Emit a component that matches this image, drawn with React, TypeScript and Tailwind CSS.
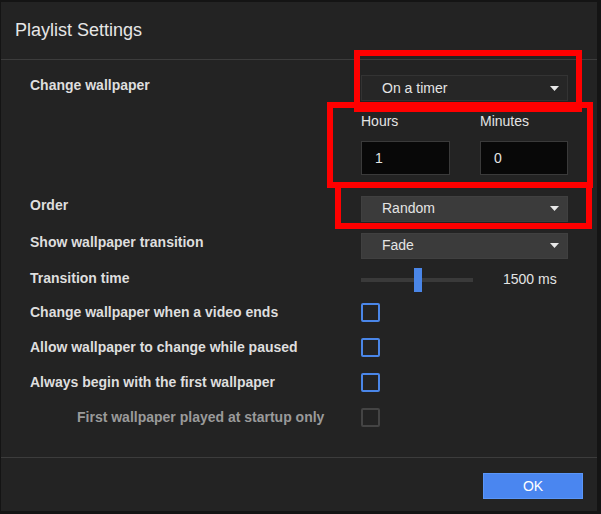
const font = { fontFamily: '"Liberation Sans", Arial, sans-serif' };

const Caret = () => (
  <svg width="9" height="5" viewBox="0 0 9 5" className="ml-auto">
    <path d="M0 0 L9 0 L4.5 5 Z" fill="#e8e8e8" />
  </svg>
);

const Select = ({ value, dark }: { value: string; dark?: boolean }) => (
  <div
    className={`flex h-[26px] w-[207px] items-center border pl-[20px] pr-[8px] text-[14px] text-[#e4e4e4] ${
      dark ? "bg-[#262626] border-[#333333]" : "bg-[#3b3b3b] border-[#404040]"
    }`}
  >
    <span>{value}</span>
    <Caret />
  </div>
);

const Checkbox = ({ disabled }: { disabled?: boolean }) => (
  <div
    className={`h-[19px] w-[19px] rounded-[2px] border-2 ${
      disabled ? "border-[#444444]" : "border-[#4a86e8]"
    }`}
  />
);

const Row = ({ label, children }: { label: string; children: React.ReactNode }) => (
  <div className="flex h-[35px] items-center">
    <span className="w-[360px] shrink-0 pl-[29px] text-[14px] font-bold text-[#dedede]">{label}</span>
    {children}
  </div>
);

export default function App() {
  return (
    <div className="relative h-[514px] w-[601px] bg-[#141414] pt-[2px] pl-[1px]" style={font}>
      <div className="flex h-[509px] w-[596px] flex-col bg-[#232323]">
        {/* Header */}
        <div className="flex h-[58px] items-center border-b border-[#3c3c3c] pl-[14px]">
          <span className="text-[18px] text-[#e6e6e6]">Playlist Settings</span>
        </div>

        {/* Body */}
        <div className="flex flex-1 flex-col pt-[15px]">
          <div className="flex">
            <span className="w-[360px] shrink-0 pl-[29px] text-[14px] font-bold text-[#dedede]">
              Change wallpaper
            </span>
            <div className="flex flex-col">
              <Select value="On a timer" dark />
              <div className="mt-[12px] flex text-[14px] leading-[16px] text-[#e4e4e4]">
                <span className="w-[119px]">Hours</span>
                <span>Minutes</span>
              </div>
              <div className="mt-[12px] flex gap-[30px]">
                <div className="flex h-[34px] w-[89px] items-center border border-[#3a3a3a] bg-[#080808] pl-[13px] text-[14px] text-[#e4e4e4]">
                  1
                </div>
                <div className="flex h-[34px] w-[88px] items-center border border-[#3a3a3a] bg-[#080808] pl-[13px] text-[14px] text-[#e4e4e4]">
                  0
                </div>
              </div>
            </div>
          </div>

          <div className="mt-[20px] flex items-center">
            <span className="w-[360px] shrink-0 pb-[6px] pl-[29px] text-[14px] font-bold text-[#dedede]">Order</span>
            <Select value="Random" />
          </div>
          <div className="mt-[10px] flex items-center">
            <span className="w-[360px] shrink-0 pb-[6px] pl-[29px] text-[14px] font-bold text-[#dedede]">
              Show wallpaper transition
            </span>
            <Select value="Fade" />
          </div>
          <div className="mt-[9px] flex h-[24px] items-center">
            <span className="w-[360px] shrink-0 pb-[3px] pl-[29px] text-[14px] font-bold text-[#dedede]">
              Transition time
            </span>
            <div className="relative flex h-[24px] w-[112px] items-center">
              <div className="h-[4px] w-full bg-[#3a3a3a]" />
              <div className="absolute left-[53px] top-0 h-[24px] w-[8px] bg-[#4a86e8]" />
            </div>
            <span className="ml-[30px] pb-[1px] text-[14px] text-[#e4e4e4]">1500 ms</span>
          </div>

          <div className="mt-[3px] flex flex-col">
            <Row label="Change wallpaper when a video ends">
              <Checkbox />
            </Row>
            <Row label="Allow wallpaper to change while paused">
              <Checkbox />
            </Row>
            <Row label="Always begin with the first wallpaper">
              <Checkbox />
            </Row>
            <div className="flex h-[35px] items-center">
              <span className="w-[360px] shrink-0 pl-[76px] text-[14px] font-bold text-[#9a9a9a]">
                First wallpaper played at startup only
              </span>
              <Checkbox disabled />
            </div>
          </div>
        </div>

        {/* Footer */}
        <div className="flex h-[54px] justify-end border-t border-[#3c3c3c] pr-[14px] pt-[15px]">
          <button className="h-[26px] w-[100px] border border-[#5a96f8] bg-[#4a86f0] text-[14px] text-white">
            OK
          </button>
        </div>
      </div>

      {/* annotation boxes */}
      <div className="pointer-events-none absolute left-[354px] top-[50px] h-[62px] w-[228px] border-[6px] border-[#ff0000]" />
      <div className="pointer-events-none absolute left-[327px] top-[102px] h-[86px] w-[266px] border-[6px] border-[#ff0000]" />
      <div className="pointer-events-none absolute left-[335px] top-[182px] h-[47px] w-[257px] border-[6px] border-[#ff0000]" />
    </div>
  );
}
